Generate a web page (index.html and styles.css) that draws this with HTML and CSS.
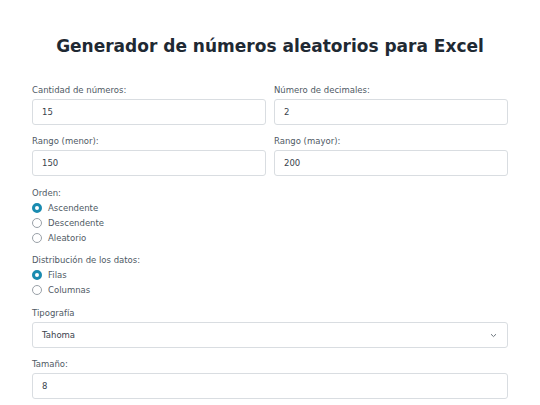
FILE: index.html
```html
<!DOCTYPE html>
<html lang="es">
<head>
<meta charset="utf-8">
<title>Generador de números aleatorios para Excel</title>
<link rel="stylesheet" href="styles.css">
</head>
<body>
<main class="page">
  <h1 class="title">Generador de números aleatorios para Excel</h1>
  <form class="form">
    <div class="row">
      <div class="field">
        <label class="label">Cantidad de números:</label>
        <input class="input" type="text" value="15">
      </div>
      <div class="field">
        <label class="label">Número de decimales:</label>
        <input class="input" type="text" value="2">
      </div>
    </div>
    <div class="row">
      <div class="field">
        <label class="label">Rango (menor):</label>
        <input class="input" type="text" value="150">
      </div>
      <div class="field">
        <label class="label">Rango (mayor):</label>
        <input class="input" type="text" value="200">
      </div>
    </div>
    <div class="group first">
      <div class="label">Orden:</div>
      <label class="radio"><input type="radio" name="orden" checked><span>Ascendente</span></label>
      <label class="radio"><input type="radio" name="orden"><span>Descendente</span></label>
      <label class="radio"><input type="radio" name="orden"><span>Aleatorio</span></label>
    </div>
    <div class="group second">
      <div class="label">Distribución de los datos:</div>
      <label class="radio"><input type="radio" name="dist" checked><span>Filas</span></label>
      <label class="radio"><input type="radio" name="dist"><span>Columnas</span></label>
    </div>
    <div class="field">
      <label class="label">Tipografía</label>
      <div class="select">
        <span>Tahoma</span>
        <svg class="chev" width="7" height="5" viewBox="0 0 7 5"><path d="M1 1.2 L3.5 3.6 L6 1.2" fill="none" stroke="#6c757d" stroke-width="1"/></svg>
      </div>
    </div>
    <div class="field">
      <label class="label">Tamaño:</label>
      <input class="input" type="text" value="8">
    </div>
  </form>
</main>
</body>
</html>
```

FILE: styles.css
```css
* { box-sizing: border-box; }
html, body { margin: 0; padding: 0; background: #fff; }
body { font-family: "DejaVu Sans", sans-serif; color: #4a5560; }
.page { width: 476px; margin: 0 auto; padding-top: 35px; }
.title {
  margin: 0 0 27px;
  font-size: 17px;
  font-weight: bold;
  color: #1f2933;
  text-align: center;
  line-height: 22px;
}
.form { display: flex; flex-direction: column; gap: 10px; }
.row { display: grid; grid-template-columns: 1fr 1fr; gap: 8px; }
.field { display: flex; flex-direction: column; }
.label { font-size: 8.5px; line-height: 12px; margin-bottom: 3px; color: #4f5a65; display: block; }
.input, .select {
  height: 26px;
  border: 1px solid #d9dde1;
  border-radius: 3px;
  padding: 0 9px;
  font-family: "DejaVu Sans", sans-serif;
  font-size: 8.5px;
  color: #3a434c;
  background: #fff;
  width: 100%;
  outline: none;
}
.select { display: flex; align-items: center; justify-content: space-between; }
.chev { margin-right: 1px; }
.group { display: flex; flex-direction: column; }
.group.first { margin-top: 1px; }
.group.second { margin-top: -1px; }
.group .label { margin-bottom: 1px; }
.radio { display: flex; align-items: center; height: 15px; font-size: 8.5px; color: #4f5a65; }
.radio input {
  appearance: none;
  -webkit-appearance: none;
  margin: 0 6px 0 0;
  width: 10px; height: 10px;
  border: 1px solid #9aa1a8;
  border-radius: 50%;
  background: #fff;
}
.radio input:checked {
  border: 3px solid #1a8bb0;
  background: #fff;
}
```
